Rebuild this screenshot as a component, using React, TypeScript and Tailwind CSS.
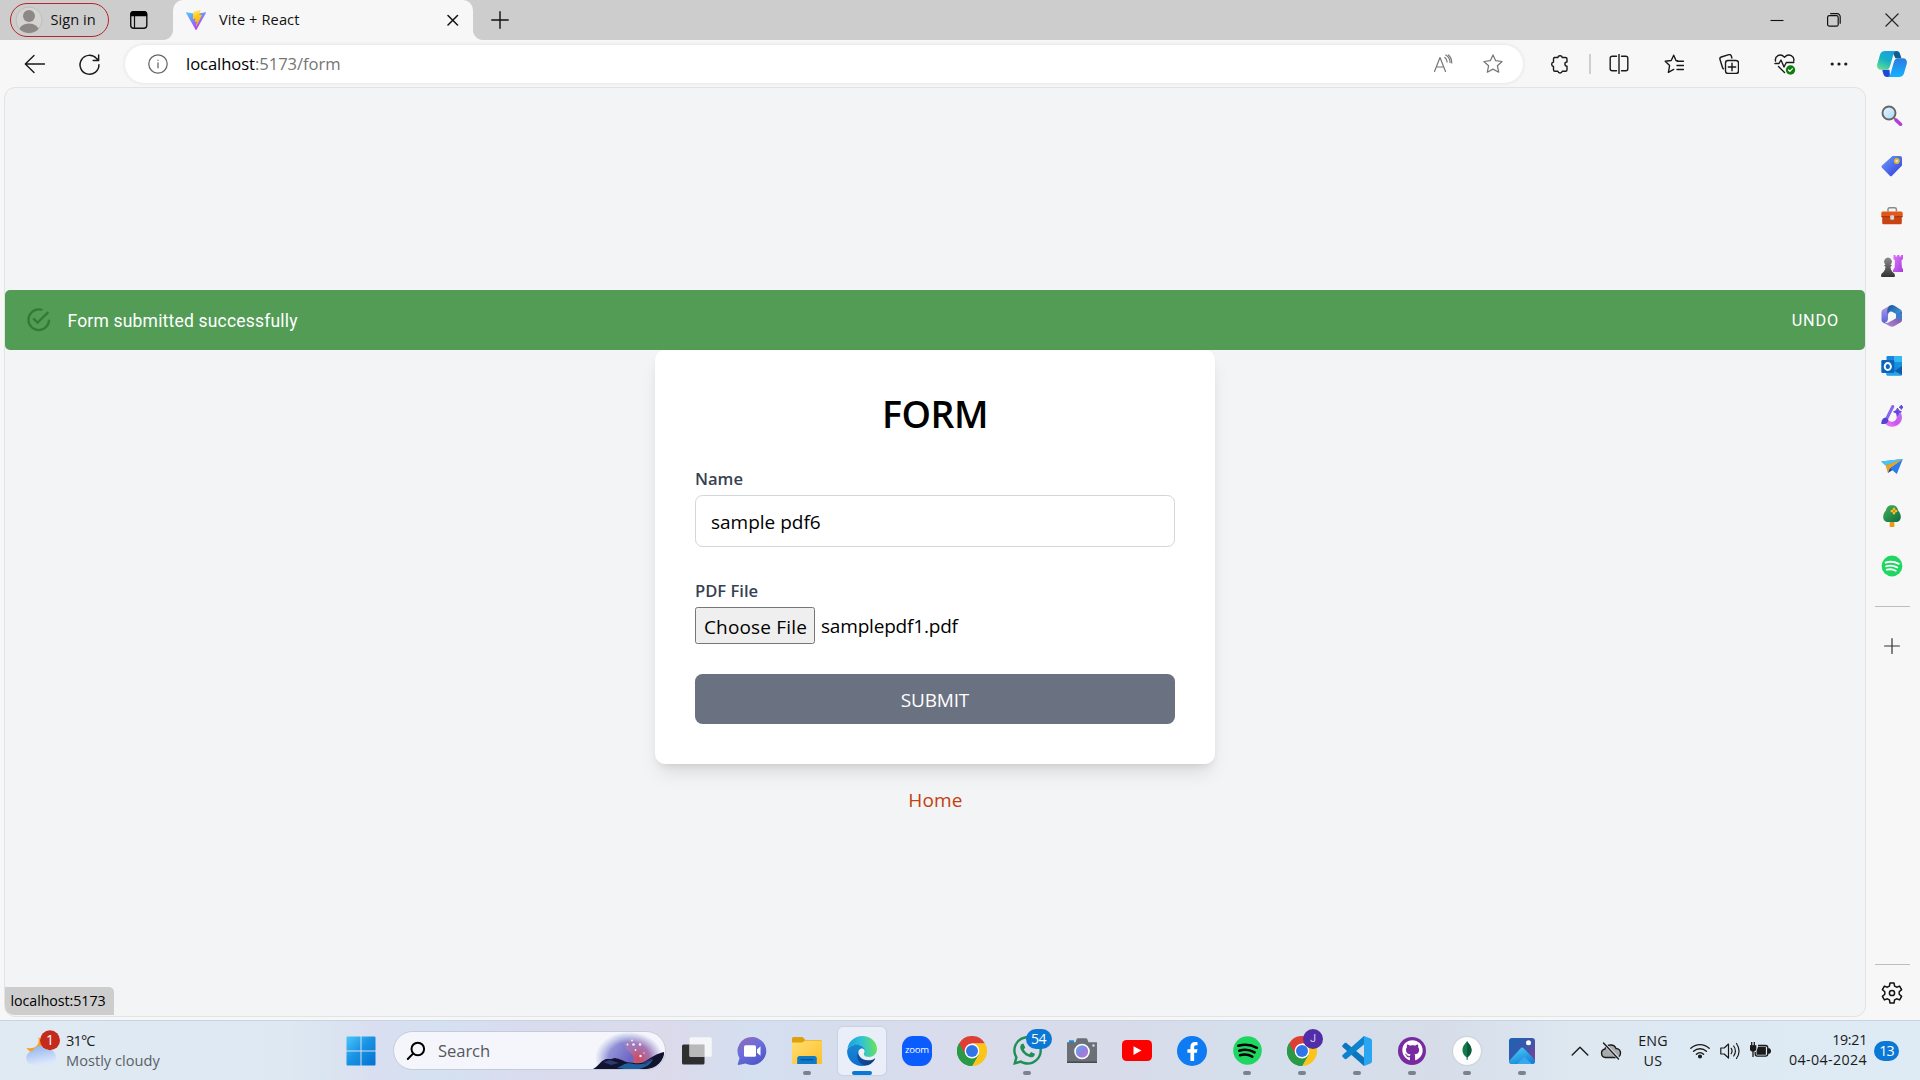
import type { ReactNode, SVGProps } from "react";
import { FaFacebookF, FaGithub, FaSpotify, FaWhatsapp } from "react-icons/fa";

function Line(props: SVGProps<SVGSVGElement>) {
  return (
    <svg
      viewBox="0 0 20 20"
      width="20"
      height="20"
      fill="none"
      stroke="currentColor"
      strokeWidth="1.25"
      strokeLinecap="round"
      strokeLinejoin="round"
      {...props}
      className={"block shrink-0 " + (props.className ?? "")}
    />
  );
}

const STAR = "M10 .9l2.7 5.8 6.4.8-4.7 4.3 1.3 6.4L10 15.1l-5.7 3.1 1.3-6.4L.9 7.5l6.4-.8z";

/* ---------- Browser chrome ---------- */

function ViteLogo() {
  return (
    <svg viewBox="0 0 20 20" width="20" height="20" className="block shrink-0">
      <defs>
        <linearGradient id="viteA" x1="0" y1="0" x2="0.6" y2="1">
          <stop offset="0" stopColor="#41d1ff" />
          <stop offset="1" stopColor="#bd34fe" />
        </linearGradient>
        <linearGradient id="viteB" x1="0.4" y1="0" x2="0.6" y2="1">
          <stop offset="0" stopColor="#ffea83" />
          <stop offset="0.3" stopColor="#ffcf20" />
          <stop offset="1" stopColor="#ffa800" />
        </linearGradient>
      </defs>
      <path d="M19.9 3.1L10.5 19.7a.5.5 0 0 1-.9 0L.1 3.1a.5.5 0 0 1 .5-.8L10 4l9.4-1.7a.5.5 0 0 1 .5.8z" fill="url(#viteA)" />
      <path d="M14.4.1L7.600 1.400a.3.3 0 0 0-.3.3l-.5 6.900c0 .2.200.4.400.3l1.900-.400c.2 0 .400.2.300.4l-.6 2.700c0 .2.200.4.400.3l1.200-.3c.2-.1.400.1.300.3l-.9 4.300c0 .300.300.4.500.200l5.700-11.300c.1-.2-.1-.4-.3-.4l-2 .4c-.2 0-.300-.2-.300-.3l1.300-4.500c.1-.1-.1-.3-.3-.2z" fill="url(#viteB)" />
    </svg>
  );
}

function TabStrip() {
  return (
    <header className="flex h-10 items-start bg-[#cdcdcd] text-[#111]">
      <div className="mt-[3px] ml-[10px] flex h-[34px] w-[98.5px] shrink-0 items-center rounded-full border-[1.5px] border-[#b3262b] pl-[3.5px]">
        <svg viewBox="0 0 28 28" width="28" height="28" className="block shrink-0">
          <defs>
            <clipPath id="avatar">
              <circle cx="14" cy="14" r="13" />
            </clipPath>
          </defs>
          <circle cx="14" cy="14" r="13" fill="#d5d3d0" stroke="#c0bebb" />
          <g clipPath="url(#avatar)" fill="#8b8885">
            <circle cx="14" cy="10" r="6" />
            <ellipse cx="14" cy="24.500" rx="9.800" ry="7" />
          </g>
        </svg>
        <span className="ml-[8px] pb-px text-[14.6px] tracking-[0.05px] whitespace-nowrap">Sign in</span>
      </div>
      <svg viewBox="0 0 20 20" width="20" height="20" className="mt-[10px] ml-[20.5px] block shrink-0">
        <rect x="1.700" y="1.700" width="16.100" height="16.600" rx="3" fill="none" stroke="#111" strokeWidth="1.400" />
        <path d="M1.500 6.200V4A3 3 0 0 1 4.500 1.100h10.600A3 3 0 0 1 18.100 4v2.200z" fill="#000" />
        <path d="M5.500 6v12" stroke="#111" strokeWidth="1.200" />
      </svg>
      <div className="ml-[14px] flex h-10 shrink-0 items-end">
        <div className="h-[10px] w-[10px] bg-[radial-gradient(circle_at_0_0,#cdcdcd_9.500px,#f7f7f7_10.500px)]" />
        <div className="flex h-10 w-[300px] items-center rounded-t-[10px] bg-[#f7f7f7] pl-[13px]">
          <ViteLogo />
          <span className="ml-[13px] w-[230px] text-[14.6px] tracking-[0.11px] whitespace-nowrap">Vite + React</span>
          <Line viewBox="0 0 12 12" width="12" height="12" strokeWidth="1.500" className="ml-[-2px]">
            <path d="M1 1.500l9.500 9.500M10.500 1.500L1 11" />
          </Line>
        </div>
        <div className="h-[10px] w-[10px] bg-[radial-gradient(circle_at_100%_0,#cdcdcd_9.500px,#f7f7f7_10.500px)]" />
      </div>
      <Line viewBox="0 0 18 18" width="18" height="18" strokeWidth="1.400" className="mt-[10.5px] ml-[8px]">
        <path d="M9 .8v16.400M.8 9h16.400" />
      </Line>
      <div className="mt-[12px] mr-[21.5px] ml-auto flex h-[15px] items-center">
        <svg viewBox="0 0 14 14" width="14" height="14" className="block">
          <path d="M.5 7.500h13" stroke="#111" strokeWidth="1.100" />
        </svg>
        <svg viewBox="0 0 14 14" width="14" height="14" className="ml-[43px] block" fill="none" stroke="#111" strokeWidth="1.200">
          <rect x=".6" y="2.600" width="10.600" height="10.600" rx="1.800" />
          <path d="M3.200.7h7a3 3 0 0 1 3 3v7" />
        </svg>
        <svg viewBox="0 0 14 14" width="14" height="14" className="ml-[44px] block" fill="none" stroke="#222" strokeWidth="1.100">
          <path d="M.5.5l13 13M13.500.5l-13 13" />
        </svg>
      </div>
    </header>
  );
}

function CopilotIcon() {
  return (
    <svg viewBox="0 0 30 26" width="30" height="26" className="block shrink-0">
      <defs>
        <linearGradient id="cpA" x1="0.700" y1="0" x2="0.2" y2="1">
          <stop offset="0" stopColor="#1b9de2" />
          <stop offset="0.500" stopColor="#16b3c3" />
          <stop offset="1" stopColor="#63dc90" />
        </linearGradient>
        <linearGradient id="cpB" x1="0.500" y1="0" x2="0.500" y2="1">
          <stop offset="0" stopColor="#2c7be0" />
          <stop offset="1" stopColor="#14b3ff" />
        </linearGradient>
      </defs>
      <path d="M15 0h4.500c2 0 3 1 3.600 3l1.300 4.300h-6z" fill="#0c5f8c" />
      <path d="M13 26h-3c-2 0-3-1-3.600-3L5.200 18.700h7.300z" fill="#1a4ad8" />
      <path d="M8 0h12c-2 0-3 1.600-3.600 3.600l-3.300 11.300c-.7 2.400-2 3.800-4.300 3.800H4.200C.6 18.700-.4 16 .3 13L3 3.800C3.800 1.200 5.500 0 8 0z" fill="url(#cpA)" />
      <path d="M22 26H10c2 0 3-1.600 3.600-3.600l3.300-11.300c.7-2.400 2-3.800 4.300-3.800h4.600c3.600 0 4.600 2.700 3.900 5.700L27 22.200c-.8 2.600-2.500 3.800-5 3.800z" fill="url(#cpB)" />
    </svg>
  );
}

function Toolbar() {
  return (
    <div className="flex h-[47px] items-center bg-[#f7f7f7] pt-px text-[#1a1a1a]">
      <Line viewBox="0 0 22 20" width="22" height="20" className="ml-[24px]" strokeWidth="1.400">
        <path d="M20.500 10H1.500M10 1.500L1.300 10l8.700 8.500" />
      </Line>
      <Line className="ml-[33px] overflow-visible" width="21" height="21" strokeWidth="1.400">
        <path d="M19 10.200A9 9 0 1 1 16.800 4.400L18.500 6M18.700 1v5.200h-5.200" />
      </Line>
      <div className="ml-[25px] flex h-[38px] w-[1398px] shrink-0 items-center rounded-full bg-white shadow-[0_0_4px_rgba(0,0,0,0.1)]">
        <Line className="ml-[22.5px] text-[#666]">
          <circle cx="10" cy="10" r="9.200" />
          <path d="M10 8.800v5M10 6v.3" />
        </Line>
        <span className="ml-[18.5px] text-[16.6px] tracking-[-0.06px] whitespace-nowrap text-[#757575]">
          <span className="text-black">localhost</span>:5173/form
        </span>
        <Line className="ml-auto text-[#777]" strokeWidth="1.200">
          <path d="M1.500 17.500L7 3.500l5.500 14M3.500 13h7M11.800 3.500c1.600 1.200 2.300 2.700 2.300 4.500M12.800 1c2.700 1.700 4.200 4 4.300 7.500M15.500 1c2 1.800 3.200 4.500 3.300 8" />
        </Line>
        <Line className="mr-[20px] ml-[30px] text-[#777]">
          <path d={STAR} />
        </Line>
      </div>
      <Line className="ml-[27px]" strokeWidth="1.400">
        <path d="M4.500 3.500h3.300a2.300 2.300 0 0 1 4.500 0h3.200a1.500 1.500 0 0 1 1.500 1.500v3a2.100 2.100 0 0 0 0 4.200v3.500a1.500 1.500 0 0 1-1.500 1.500h-3.200a2.300 2.300 0 0 1-4.500 0H5a1.500 1.500 0 0 1-1.500-1.500v-3.200a2.300 2.300 0 0 1 0-4.500V5A1.500 1.500 0 0 1 4.500 3.500z" />
      </Line>
      <div className="ml-[19px] h-5 w-[1.500px] shrink-0 bg-[#cfcfcf]" />
      <Line className="ml-[18.500px]" strokeWidth="1.400">
        <path d="M7.500 2.200H3.200a2 2 0 0 0-2 2v10.600a2 2 0 0 0 2 2h4.300M12.500 2.200h4.300a2 2 0 0 1 2 2v10.600a2 2 0 0 1-2 2h-4.300M10 .2v19.300" />
      </Line>
      <Line className="ml-[35px]" strokeWidth="1.400">
        <path d="M13.500 6.800L12 6.500 9.700 1.200 7.200 6.500l-6 .7 4.400 4.300-1.200 6.900 5.300-3M13 7.300h6.500M13 11.500h6.500M13 15.500h6.500" />
      </Line>
      <Line className="ml-[35px]" strokeWidth="1.400">
        <path d="M4.500 14.800a2 2 0 0 1-1-1.300L1 5.500a2 2 0 0 1 1.300-2.500l7.500-2.300A2 2 0 0 1 12.300 2l.6 2" />
        <rect x="6.500" y="6.500" width="13" height="13" rx="2.500" />
        <path d="M13 9.300v7.400M9.300 13h7.400" />
      </Line>
      <svg viewBox="0 0 22 22" width="22" height="22" className="ml-[34.5px] block shrink-0" fill="none" stroke="#1a1a1a" strokeWidth="1.400" strokeLinecap="round" strokeLinejoin="round">
        <path d="M1.500 8C.5 3.500 6-.5 10.500 4.200 15-.5 21 3.500 19.700 8M1 10.500h4l2-3.500 3 7 2.300-4.500h7.500M4.500 13.500l6 6" />
        <circle cx="16.500" cy="17" r="4.700" fill="#107c10" stroke="none" />
        <path d="M14.500 17l1.400 1.400 2.500-2.700" stroke="#fff" strokeWidth="1.200" />
      </svg>
      <svg viewBox="0 0 18 4" width="18" height="4" className="ml-[34.5px] block shrink-0" fill="#1a1a1a">
        <circle cx="2.200" cy="2" r="1.600" />
        <circle cx="9" cy="2" r="1.600" />
        <circle cx="15.800" cy="2" r="1.600" />
      </svg>
      <div className="ml-[29px] shrink-0">
        <CopilotIcon />
      </div>
    </div>
  );
}

/* ---------- Edge sidebar ---------- */

function SideSvg({ children }: { children: ReactNode }) {
  return (
    <svg viewBox="0 0 22 22" width="22" height="22" className="block">
      {children}
    </svg>
  );
}

const sideIcons: ReactNode[] = [
  <SideSvg key="search">
    <defs>
      <linearGradient id="lens" x1="0" y1="0" x2="1" y2="1">
        <stop offset="0" stopColor="#e8f6ff" />
        <stop offset="1" stopColor="#a9d8f7" />
      </linearGradient>
    </defs>
    <path d="M13 13l2 2" stroke="#777" strokeWidth="2" />
    <path d="M15.200 15.200l4.300 4" stroke="#b43ddb" strokeWidth="3.600" strokeLinecap="round" />
    <circle cx="8" cy="8" r="6.500" fill="url(#lens)" stroke="#666" strokeWidth="1.900" />
  </SideSvg>,
  <SideSvg key="tag">
    <defs>
      <linearGradient id="tag" x1="0" y1="0" x2="1" y2="1">
        <stop offset="0" stopColor="#6aa2f8" />
        <stop offset="1" stopColor="#3338dd" />
      </linearGradient>
    </defs>
    <path d="M11.500 1h7.500a2 2 0 0 1 2 2v7.500L11 20.700a1.600 1.600 0 0 1-2.200 0L1 12.800a1.600 1.600 0 0 1 0-2.200z" fill="url(#tag)" />
    <circle cx="15.800" cy="6" r="2.100" fill="#ded8ff" stroke="#e2bd20" strokeWidth="1.600" />
  </SideSvg>,
  <SideSvg key="toolbox">
    <path d="M7 6.500V4.300A1.700 1.700 0 0 1 8.700 2.700h5A1.700 1.700 0 0 1 15.400 4.300v2.200" fill="none" stroke="#858b90" strokeWidth="1.500" />
    <path d="M1.200 11h19.600v6.800a1.500 1.500 0 0 1-1.500 1.500H2.700a1.500 1.500 0 0 1-1.500-1.500z" fill="#c94413" />
    <path d="M1.800 6.500h18.400a1.500 1.500 0 0 1 1.500 1.500v4H.3V8a1.500 1.500 0 0 1 1.500-1.500z" fill="#e25819" />
    <path d="M.5 11.700h21" stroke="#9c3210" strokeWidth="1" />
    <rect x="9.200" y="10.300" width="3.900" height="4.500" rx="1" fill="#d3d6d8" />
  </SideSvg>,
  <SideSvg key="chess">
    <defs>
      <linearGradient id="rook" x1="0" y1="0" x2="1" y2="1">
        <stop offset="0" stopColor="#d97bf5" />
        <stop offset="1" stopColor="#a83ae0" />
      </linearGradient>
      <linearGradient id="pawn" x1="0" y1="0" x2="0" y2="1">
        <stop offset="0" stopColor="#8c8c8c" />
        <stop offset="1" stopColor="#333" />
      </linearGradient>
    </defs>
    <path d="M12.500 0h2v1.600h1.700V0h2.200v1.600h1.700V0h2v4l-1.600 1.500.4 7 1.600 2.500v2H12v-2l1.600-2.500.4-7L12.500 4z" fill="url(#rook)" />
    <path d="M7 2.500a4 4 0 0 1 2.500 7l1.500 1-1.500 1.200c.2 2.800 1 4.500 3.700 6.800.8.700 1 3.500 0 3.500H.8c-1 0-.8-2.800 0-3.500C3.500 16.200 4.300 14.500 4.500 11.700L3 10.500l1.500-1a4 4 0 0 1 2.500-7z" fill="url(#pawn)" />
  </SideSvg>,
  <SideSvg key="m365">
    <defs>
      <linearGradient id="mA" x1="0" y1="0" x2="0" y2="1">
        <stop offset="0" stopColor="#b49be6" />
        <stop offset="1" stopColor="#5a63d8" />
      </linearGradient>
      <linearGradient id="mB" x1="0" y1="0" x2="1" y2="1">
        <stop offset="0" stopColor="#1d4d9c" />
        <stop offset="1" stopColor="#45b4ee" />
      </linearGradient>
      <linearGradient id="mC" x1="1" y1="0" x2="0" y2="1">
        <stop offset="0" stopColor="#6a4a94" />
        <stop offset="1" stopColor="#b98be0" />
      </linearGradient>
    </defs>
    <path d="M8.500.8L2 4.500A3 3 0 0 0 .5 7v8A3 3 0 0 0 2 17.500l1.500.8C6 17 7 16 7 13V8z" fill="url(#mA)" />
    <path d="M8.500.8a5 5 0 0 1 5 0l6 3.700A3 3 0 0 1 21 7v7c-1-2-3.500-3.500-6.500-5.200L11 6.700C8.500 6 7 8 7 11 5.500 7 6 3 8.500.8z" fill="url(#mB)" />
    <path d="M21 7v8a3 3 0 0 1-1.500 2.500l-6 3.600a5 5 0 0 1-5 0L3 18c3 .3 5-.8 8-2.600 4-2.300 4-3.400 4-6.600z" fill="url(#mC)" />
    <path d="M15 9l6-1v5.500c-1 1.500-3 1.500-6-.5z" fill="#3c7fd2" />
    <path d="M11 6.900l4 2.300v4L11 15.500l-4-2.300v-4z" fill="#f7f7f7" />
  </SideSvg>,
  <SideSvg key="outlook">
    <rect x="5.500" y="1" width="15.500" height="19.500" rx="1.200" fill="#1a86dc" />
    <path d="M13 1h7a1 1 0 0 1 1 1v5h-8z" fill="#35b8f1" />
    <path d="M13 7h8v5h-8z" fill="#1490df" />
    <path d="M5.500 12l8 4.500L21 11v8.500a1 1 0 0 1-1 1H6.500a1 1 0 0 1-1-1z" fill="#25a5ea" />
    <path d="M13.500 16l7.500-5v9z" fill="#0f5da9" />
    <rect x=".3" y="5" width="13" height="13" rx="1.300" fill="#0b64bd" />
    <ellipse cx="6.800" cy="11.500" rx="3.100" ry="3.500" fill="none" stroke="#fff" strokeWidth="1.900" />
  </SideSvg>,
  <SideSvg key="designer">
    <defs>
      <linearGradient id="dsg" x1="0" y1="1" x2="1" y2="0">
        <stop offset="0" stopColor="#f08cf6" />
        <stop offset="0.500" stopColor="#cf52ee" />
        <stop offset="1" stopColor="#b57bf2" />
      </linearGradient>
    </defs>
    <path d="M2.500 16.500c2 .5 3.500-.2 4.500-2 1.500 2.600 5 3.200 7.200 1 1.600-1.600 1.800-3.500 1-5.500l4.600-2.500c2 4 1.500 8.500-1.800 11.600-4.500 4.200-12 3.700-15.500-2.600z" fill="url(#dsg)" />
    <path d="M11.800 1.500L5.800 13.500" stroke="#8a63ee" strokeWidth="3" strokeLinecap="round" />
    <path d="M.3 19C.3 15 2 12.500 4.700 12.700c2.600.3 3.300 3 1.700 4.700C5 19 2.700 19.300.3 19z" fill="#5145d5" />
    <path d="M16.500 3l1.200 2.600 2.700 1.200-2.700 1.200-1.200 2.700-1.200-2.700-2.700-1.200 2.700-1.200zM20.300 0l.7 1.600 1.500.6-1.500.7-.7 1.500-.7-1.500-1.500-.7 1.500-.6z" fill="#6347dd" stroke="#6347dd" />
  </SideSvg>,
  <SideSvg key="drop">
    <path d="M.3 6.500L21.800 4l-15 8z" fill="#46bdf2" />
    <path d="M21.800 4l-6 15-7-6z" fill="#2b7be8" />
    <path d="M21.800 4L9 12.500 7 18l-1.200-6.500L.3 6.500z" fill="#3aaef0" />
    <path d="M21.800 4L4.500 10.500 7 18l2-5z" fill="#f0a01c" />
    <path d="M7 18l2-5 2.500 2z" fill="#17439b" />
    <path d="M.3 6.500L21.800 4 4.500 10.300z" fill="#4cc3f5" />
  </SideSvg>,
  <SideSvg key="tree">
    <defs>
      <linearGradient id="tree" x1="0" y1="0" x2="1" y2="1">
        <stop offset="0" stopColor="#44b35a" />
        <stop offset="1" stopColor="#0e6a3c" />
      </linearGradient>
    </defs>
    <rect x="8.700" y="15" width="4.700" height="7" rx=".6" fill="#eb9b17" />
    <path d="M11 .3c4 0 5.500 2.500 6.300 5.500 1.500 1.500 2.500 4 2.500 6.200 0 3-2 5-5 5H7.200c-3 0-5-2-5-5 0-2.200 1-4.700 2.500-6.200C5.500 2.800 7 .3 11 .3z" fill="url(#tree)" />
    <path d="M13 3.800v4.400M10.800 6h4.400" stroke="#f5c02c" strokeWidth="2.500" strokeLinecap="round" />
    <circle cx="13" cy="6" r="1.100" fill="#d97812" />
  </SideSvg>,
  <SideSvg key="spotify">
    <circle cx="11" cy="11" r="10.400" fill="#1ed760" />
    <path d="M4.500 7.600c4.500-1.400 9.500-.8 13.300 1.300M5 11.300c4-1.100 8-.7 11.300 1.200M5.700 14.700c3.200-.8 6.300-.5 9 1" fill="none" stroke="#fff" strokeWidth="1.800" strokeLinecap="round" />
  </SideSvg>,
];

function Sidebar() {
  return (
    <aside className="flex w-[54px] shrink-0 flex-col items-center bg-[#f7f7f7] pt-[17.500px] pr-[2px]">
      <div className="flex flex-col gap-[28px]">
        {sideIcons}
      </div>
      <div className="mt-[29.500px] h-px w-[35px] bg-[#bdbdbd]" />
      <Line viewBox="0 0 16 16" width="16" height="16" strokeWidth="1.200" className="mt-[31px] text-[#333]">
        <path d="M8 .6v14.800M.6 8h14.800" />
      </Line>
      <div className="mt-auto h-px w-[35px] bg-[#bdbdbd]" />
      <Line viewBox="0 0 22 22" width="22" height="22" strokeWidth="1.500" className="mt-[17px] mb-[16px] text-[#111]">
        <path d="M9 1h4l.6 3.100 2 1.100 3-1.100 2 3.500-2.400 2.100v2.600l2.400 2.100-2 3.500-3-1.100-2 1.100L13 21H9l-.6-3.100-2-1.100-3 1.100-2-3.500 2.400-2.100V9.700L1.400 7.600l2-3.500 3 1.100 2-1.100z" />
        <circle cx="11" cy="11" r="2.600" />
      </Line>
    </aside>
  );
}

/* ---------- Web page ---------- */

function Snackbar() {
  return (
    <div className="mt-[202px] flex h-[60px] w-full items-center rounded-[5px] bg-[#529c56] text-white">
      <svg viewBox="0 0 24 24" width="27.500" height="27.500" className="ml-[20px] block" fill="#2e7d32">
        <path d="M20,12A8,8 0 0,1 12,20A8,8 0 0,1 4,12A8,8 0 0,1 12,4C12.76,4 13.5,4.11 14.2, 4.31L15.77,2.74C14.61,2.26 13.34,2 12,2A10,10 0 0,0 2,12A10,10 0 0,0 12,22A10,10 0 0,0 22,12M7.91,10.08L6.5,11.5L11,16L21,6L19.59,4.58L11,13.17L7.91,10.08Z" />
      </svg>
      <span className="ml-[15px] pt-[2px] font-[Roboto,sans-serif] text-[17.5px] tracking-[0.19px] whitespace-nowrap">
        Form submitted successfully
      </span>
      <span className="mr-[26px] ml-auto pt-[3px] font-[Roboto,sans-serif] text-[16.250px] tracking-[0.85px]">UNDO</span>
    </div>
  );
}

function FormCard() {
  return (
    <div className="w-[560px] rounded-[10px] bg-white p-10 shadow-[0_12px_19px_-4px_rgba(0,0,0,0.1),0_5px_8px_-4px_rgba(0,0,0,0.1)]">
      <h1 className="h-[45px] pt-[2px] text-center text-[37.5px] leading-[44px] font-semibold tracking-[-0.5px] text-black">FORM</h1>
      <div className="mt-[31px] h-[25px] text-[16.6px] leading-[25px] font-[550] text-gray-700">Name</div>
      <div className="mt-1 flex h-[52px] items-center rounded-[7.5px] border border-gray-300 px-[15px] pt-[2px] text-[19px] text-black">
        sample pdf6
      </div>
      <div className="mt-[31px] h-[25px] text-[16.600px] leading-[25px] font-[550] text-gray-700">PDF File</div>
      <div className="mt-1 flex h-[37px] items-center text-[19px] text-black">
        <div className="flex h-[37px] w-[120px] items-center justify-center rounded-[2.5px] border border-[#767676] bg-[#efefef] pt-[3px] pl-px tracking-[0.18px] whitespace-nowrap">
          Choose File
        </div>
        <span className="ml-[6px] pt-[2px] tracking-[-0.19px]">samplepdf1.pdf</span>
      </div>
      <div className="mt-[30px] flex h-[50px] items-center justify-center rounded-[7.5px] bg-gray-500 pt-[2px] text-[19px] tracking-[-0.19px] text-white">
        SUBMIT
      </div>
    </div>
  );
}

function Page() {
  return (
    <main className="relative ml-1 flex h-[930px] w-[1862px] shrink-0 flex-col items-center overflow-hidden rounded-[11px] border border-[#e2e3e5] bg-gray-100">
      <Snackbar />
      <FormCard />
      <div className="mt-[21px] pl-px text-[19px] leading-[30px] tracking-[0.150px] text-[#c2410c]">Home</div>
      <div className="absolute bottom-px -left-px flex h-[28px] w-[110px] items-center rounded-tr-[5px] rounded-bl-[10px] bg-[#cdcdcd] pl-[6.500px] text-[14.250px] tracking-[-0.07px] text-black">
        localhost:5173
      </div>
    </main>
  );
}

/* ---------- Taskbar ---------- */

function WeatherIcon() {
  return (
    <svg viewBox="0 0 34 36" width="34" height="36" className="block shrink-0">
      <defs>
        <linearGradient id="cloud" x1="0" y1="0" x2="0.300" y2="1">
          <stop offset="0" stopColor="#8db0ec" />
          <stop offset="1" stopColor="#dbe8fb" />
        </linearGradient>
      </defs>
      <path d="M12.500 7c1 8-2 12-12 11 4 6 11 6.500 15 2l3-8z" fill="#f7a32b" />
      <path d="M7.500 35a7 7 0 0 1-.5-14c1.500-6 11-7 14-1 5-1.500 9 2.500 9 7.500 0 4-3 7.500-7 7.500z" fill="url(#cloud)" />
      <circle cx="24" cy="10.200" r="10" fill="#c42b1c" />
    </svg>
  );
}

function SearchScene() {
  return (
    <svg viewBox="0 0 72 37" width="72" height="37" className="block shrink-0">
      <defs>
        <radialGradient id="fade" gradientUnits="userSpaceOnUse" cx="36" cy="26" r="34" gradientTransform="matrix(1 0 0 0.760 0 6)">
          <stop offset="0.600" stopColor="#fff" />
          <stop offset="1" stopColor="#fff" stopOpacity="0" />
        </radialGradient>
        <mask id="skyMask">
          <rect width="72" height="37" fill="url(#fade)" />
        </mask>
        <radialGradient id="glow" gradientUnits="userSpaceOnUse" cx="45" cy="27" r="26">
          <stop offset="0" stopColor="#d2485a" />
          <stop offset="0.450" stopColor="#a673b0" />
          <stop offset="1" stopColor="#8790d8" />
        </radialGradient>
        <linearGradient id="planet" x1="0" y1="0" x2="1" y2="0.500">
          <stop offset="0" stopColor="#b9c0ea" />
          <stop offset="1" stopColor="#6c66c4" />
        </linearGradient>
        <clipPath id="pill">
          <path d="M0 0h53a18.500 18.500 0 0 1 0 37H0z" />
        </clipPath>
      </defs>
      <g clipPath="url(#pill)">
        <g mask="url(#skyMask)">
          <rect width="72" height="37" fill="url(#glow)" />
          <path d="M0 37V6h22c8 1 9 7 12 12 4 4 7 5 7 10l-4 9z" fill="url(#planet)" />
        </g>
        <path d="M0 37c6-3 7-8 13-10 5 0 6 0 9-1 5 1 7 2 11 4 10 1 16 3 21-2 5-3 9-6 17-8v20z" fill="#12142f" />
        <path d="M24 36c7-3 8-6 17-4 6 1 12 0 19-5-3 7-10 10-20 11z" fill="#1f5f9e" />
        <path d="M10 30l7-2 9 3-8 2zM50 30l10-4-8 7z" fill="#2b3a74" />
        <g fill="#fff1e8">
          <circle cx="39" cy="8.500" r=".9" />
          <circle cx="34.500" cy="12.500" r="1" />
          <circle cx="40.500" cy="12.500" r="1.300" />
          <circle cx="47" cy="12.500" r="1.300" />
          <circle cx="42.500" cy="18" r=".9" />
          <circle cx="47.500" cy="24" r="1.200" />
          <circle cx="51" cy="21" r=".7" />
        </g>
      </g>
    </svg>
  );
}

function ChromeIcon() {
  return (
    <svg viewBox="0 0 30 30" width="30" height="30" className="block">
      <path d="M15 15L2 7.500A15 15 0 0 1 28 7.500H15z" fill="#dd3f34" />
      <path d="M15 7.500h13A15 15 0 0 1 15 30l6.500-11.200z" fill="#fcc419" />
      <path d="M2 7.500A15 15 0 0 0 15 30l6.500-11.200L15 15z" fill="#2a9a47" />
      <path d="M2 7.500l6.500 11.300L15 12V7.500z" fill="#dd3f34" />
      <path d="M2 7.500A15 15 0 0 0 0 15c0 8.300 6.700 15 15 15l6.500-11.200-6.500 1-6.500-1z" fill="#2a9a47" />
      <circle cx="15" cy="15" r="7.400" fill="#fff" />
      <circle cx="15" cy="15" r="6" fill="#2f75e8" />
    </svg>
  );
}

function EdgeIcon() {
  return (
    <svg viewBox="0 0 30 30" width="30" height="30" className="block">
      <defs>
        <linearGradient id="edA" x1="0" y1="0.500" x2="1" y2="0.400">
          <stop offset="0" stopColor="#1b9bde" />
          <stop offset="0.500" stopColor="#2fc3d3" />
          <stop offset="1" stopColor="#6be556" />
        </linearGradient>
        <linearGradient id="edB" x1="0.500" y1="0" x2="0.500" y2="1">
          <stop offset="0" stopColor="#1689d2" />
          <stop offset="1" stopColor="#0d6fd0" />
        </linearGradient>
        <linearGradient id="edC" x1="0" y1="0" x2="1" y2="0.500">
          <stop offset="0" stopColor="#0e56a8" />
          <stop offset="1" stopColor="#123f80" />
        </linearGradient>
      </defs>
      <path d="M.4 13C1.500 5.500 7.500 0 15.200 0 24 0 30 6.200 30 13c0 5.200-4 8-8 8-4.500 0-6-2-5.300-3.200C18 15.500 18.300 9 10.500 9 5 9 1.300 11 .4 13z" fill="url(#edA)" />
      <path d="M.1 15C.3 11 5.500 8.500 10.500 8.700c5 .3 7.300 3.300 7.200 6-1.200-2.500-5-3-6.500.8C9.500 20.500 13 27.500 20 28.800c-1.500.8-3.300 1.200-5 1.200C6.500 30-.2 23 .1 15z" fill="url(#edB)" />
      <path d="M11.500 14.500c-1.200 3.800 2 9.800 9.500 9.800 3 0 4.800-.6 6.300-1.600.6-.3 1 .2.600.7C25.500 27.300 22 29.500 18 29.500 11.500 28.500 8 20 11.500 14.500z" fill="url(#edC)" />
      <path d="M14.500 12.500c2.400 0 3.500 2 2.500 4.300-.6 1.200-.5 2.300 1 3.300-4.500-.5-6-4-5-6.500.3-.7.800-1 1.500-1.100z" fill="#eef2fa" />
    </svg>
  );
}

function TaskButton({ children, running = false, active = false }: { children: ReactNode; running?: boolean; active?: boolean }) {
  return (
    <div className="flex w-[55px] shrink-0 justify-center">
      <div
        className={
          active
            ? "relative flex h-[48px] w-[48px] items-center justify-center rounded-[5px] bg-[#e9eef8] shadow-[0_0_1px_1px_rgba(180,190,210,0.35)]"
            : "relative flex h-[48px] w-[48px] items-center justify-center"
        }
      >
        {children}
        {running && (
          <div className="absolute inset-x-0 bottom-0 flex justify-center">
            <div className="h-[4px] w-[8px] rounded-full bg-[#7c828c]" />
          </div>
        )}
        {active && (
          <div className="absolute inset-x-0 bottom-0 flex justify-center">
            <div className="h-[4px] w-[20px] rounded-full bg-[#0a78d4]" />
          </div>
        )}
      </div>
    </div>
  );
}

function Apps() {
  return (
    <div className="flex items-center">
      <TaskButton>
        <svg viewBox="0 0 30 28" width="30" height="28" className="block">
          <rect x="0" y="7.500" width="22.500" height="20" rx="1.500" fill="#2f2f2f" />
          <rect x="7.500" y=".2" width="22.300" height="19.500" rx="1.500" fill="#f8f8f8" fillOpacity=".9" />
          <path d="M7.500 7.500h15v12.200h-15z" fill="#b9b9b9" />
        </svg>
      </TaskButton>
      <TaskButton>
        <svg viewBox="0 0 30 30" width="30" height="30" className="block">
          <defs>
            <linearGradient id="chat" x1="0" y1="0" x2="0.600" y2="1">
              <stop offset="0" stopColor="#9a68b0" />
              <stop offset="0.500" stopColor="#6a6fdc" />
              <stop offset="1" stopColor="#5157c8" />
            </linearGradient>
          </defs>
          <path d="M15 1a14.300 14 0 1 1-6.500 26.500L1.500 29c-.6 0-.8-.3-.7-.9L2.500 22A14.300 14 0 0 1 15 1z" fill="url(#chat)" />
          <rect x="7" y="9.300" width="12" height="11.500" rx="1.500" fill="#fff" />
          <path d="M20 13.500l3.500-3.200v9.500L20 16.700z" fill="#fff" />
        </svg>
      </TaskButton>
      <TaskButton running>
        <svg viewBox="0 0 30 27" width="30" height="27" className="block">
          <defs>
            <linearGradient id="folder" x1="0" y1="0" x2="1" y2="1">
              <stop offset="0" stopColor="#ffdf73" />
              <stop offset="1" stopColor="#fdbf2a" />
            </linearGradient>
          </defs>
          <path d="M0 1.500A1.500 1.500 0 0 1 1.500 0h8.300c1 0 1.500.6 2.300 1.500L13.500 3H28.500A1.500 1.500 0 0 1 30 4.500V9H0z" fill="#e0a00c" />
          <path d="M0 5.500h10.500L13 3.500h17V27H0z" fill="url(#folder)" />
          <path d="M5.200 27v-5.500a2.500 2.500 0 0 1 2.500-2.500h14.600a2.500 2.500 0 0 1 2.500 2.500V27z" fill="#0f7bc8" />
          <path d="M8.500 22.700h13" stroke="#0b4f8e" strokeWidth="1.200" />
        </svg>
      </TaskButton>
      <TaskButton active>
        <EdgeIcon />
      </TaskButton>
      <TaskButton>
        <div className="flex h-[30px] w-[30px] items-center justify-center rounded-[11px] bg-[#0b5cff] pb-[2px] text-[9.500px] leading-none font-medium tracking-[-0.2px] text-white">zoom</div>
      </TaskButton>
      <TaskButton>
        <ChromeIcon />
      </TaskButton>
      <TaskButton running>
        <FaWhatsapp size={33} color="#1f8f55" className="shrink-0" />
        <div className="absolute top-[2px] -right-[0.500px] flex h-[20px] w-[26px] items-center justify-center rounded-full bg-[#0a78d4] text-[14px] leading-none tracking-[-0.600px] text-white">54</div>
      </TaskButton>
      <TaskButton>
        <svg viewBox="0 0 30 25" width="30" height="25" className="block">
          <defs>
            <linearGradient id="glass" x1="0" y1="0" x2="1" y2="1">
              <stop offset="0" stopColor="#54b6f5" />
              <stop offset="0.500" stopColor="#8e83dc" />
              <stop offset="1" stopColor="#c774d8" />
            </linearGradient>
          </defs>
          <path d="M2 2.300h5V6H2z" fill="#178ad8" />
          <path d="M9.500 1.500A1.500 1.500 0 0 1 11 .3h8a1.500 1.500 0 0 1 1.400 1.200L21.500 4.200H30V25H0V4.200h8.500z" fill="#6b7077" />
          <path d="M0 23.500h30V25H0z" fill="#474a4f" />
          <circle cx="15" cy="13.500" r="7" fill="url(#glass)" stroke="#fff" strokeWidth="1.600" />
          <circle cx="26.500" cy="7.500" r="1.200" fill="#ddd" />
        </svg>
      </TaskButton>
      <TaskButton>
        <svg viewBox="0 0 30 21" width="30" height="21" className="block">
          <rect width="30" height="21" rx="4.500" fill="#f00" />
          <path d="M11.500 6.300l8 4.300-8 4.300z" fill="#fff" />
        </svg>
      </TaskButton>
      <TaskButton>
        <div className="flex h-[30px] w-[30px] items-end justify-center overflow-hidden rounded-full bg-[#0f7bf2] pb-[5px]">
          <FaFacebookF size={19} color="#fff" />
        </div>
      </TaskButton>
      <TaskButton running>
        <svg viewBox="0 0 29 29" width="29" height="29" className="block">
          <circle cx="14.500" cy="14.500" r="14.300" fill="#1ed760" />
          <path d="M5.300 9.800c6.200-1.900 13.200-1.100 18.600 2M6.200 14.700c5.400-1.500 11-.8 15.400 1.700M7 19.200c4.400-1.200 8.600-.7 12.300 1.400" fill="none" stroke="#000" strokeWidth="2.500" strokeLinecap="round" />
        </svg>
      </TaskButton>
      <TaskButton running>
        <ChromeIcon />
        <div className="absolute top-[2px] right-[3px] flex h-[20px] w-[20px] items-center justify-center rounded-full bg-[#512da8] font-[Roboto,sans-serif] text-[11px] leading-none text-[#d5c7f0]">J</div>
      </TaskButton>
      <TaskButton running>
        <svg viewBox="0 0 30 30" width="30" height="30" className="block">
          <path d="M22 0v30L.8 11.200c-.8-.8-.8-1.600 0-2.300l1.700-1.600c.7-.6 1.500-.6 2.200 0L22 21.500z" fill="#0b75bd" />
          <path d="M22 0v8.500L4.700 22.700c-.7.600-1.500.6-2.200 0L.8 21.100c-.8-.7-.8-1.500 0-2.300z" fill="#0d83cf" />
          <path d="M22 0l6.500 2.600A2.300 2.300 0 0 1 30 4.800v20.400a2.300 2.300 0 0 1-1.500 2.200L22 30z" fill="#2aa5f2" />
        </svg>
      </TaskButton>
      <TaskButton running>
        <div className="flex h-[28px] w-[28px] items-center justify-center rounded-full bg-[#7a2a9f]">
          <FaGithub size={21} color="#fff" />
        </div>
      </TaskButton>
      <TaskButton running>
        <div className="flex h-[28px] w-[28px] items-center justify-center rounded-full bg-[#fdfdfd] shadow-[0_0_2px_rgba(0,0,0,0.2)]">
          <svg viewBox="0 0 10 19" width="10" height="19" className="block">
            <path d="M5 0c.7 2 4.500 4 4.500 9 0 4-2.500 6-4 7.300L5.300 19h-.6l-.2-2.700C3 15 .5 13 .5 9 .5 4 4.300 2 5 0z" fill="#0f7a4c" />
            <path d="M5 0c.7 2 4.500 4 4.500 9 0 4-2.500 6-4 7.300L5.300 19H5z" fill="#0a5a39" />
          </svg>
        </div>
      </TaskButton>
      <TaskButton running>
        <svg viewBox="0 0 26 26" width="26" height="26" className="block">
          <defs>
            <linearGradient id="ph" x1="0" y1="0" x2="1" y2="0.800">
              <stop offset="0" stopColor="#1a63b4" />
              <stop offset="0.600" stopColor="#3f55a8" />
              <stop offset="1" stopColor="#7a3f98" />
            </linearGradient>
            <linearGradient id="mt" x1="0" y1="0" x2="0.600" y2="1">
              <stop offset="0" stopColor="#4fd3fb" />
              <stop offset="1" stopColor="#1583d8" />
            </linearGradient>
            <clipPath id="phc">
              <rect width="26" height="26" rx="3" />
            </clipPath>
          </defs>
          <g clipPath="url(#phc)">
            <rect width="26" height="26" fill="url(#ph)" />
            <path d="M0 23L11.500 10.500a2.300 2.300 0 0 1 3.400 0L26 22v4H0z" fill="url(#mt)" />
            <path d="M8 26l6-6a2 2 0 0 1 2.800 0l6 6z" fill="#3aa6ee" />
            <circle cx="19.500" cy="4.700" r="2.500" fill="#fff" />
          </g>
        </svg>
      </TaskButton>
    </div>
  );
}

function Tray() {
  return (
    <div className="flex h-full items-center text-[14.250px] leading-[20px] text-[#1b1b1b]">
      <Line viewBox="0 0 18 10" width="18" height="10" strokeWidth="1.400" className="mr-[11px]">
        <path d="M1.200 9L9 1.200 16.800 9" />
      </Line>
      <svg viewBox="0 0 22 18" width="22" height="18" className="block shrink-0" fill="none" stroke="#1b1b1b" strokeWidth="1.400" strokeLinecap="round">
        <path d="M5.500 15.500a4.300 4.300 0 0 1-.5-8.500C6 2.500 14 1 16 6.500c6 0 6 9 0 9z" fill="#a9aaac" />
        <path d="M4 1.500l14.500 15" stroke="#dfe8f2" strokeWidth="3" />
        <path d="M3.500 1L18.500 17" />
      </svg>
      <div className="ml-[13px] flex w-[36px] flex-col items-center">
        <span className="tracking-[0.15px]">ENG</span>
        <span className="tracking-[0.3px]">US</span>
      </div>
      <Line viewBox="0 0 20 16" width="20" height="16" strokeWidth="1.300" className="ml-[19px]">
        <path d="M.8 5.300a13.200 13.200 0 0 1 18.400 0M3.600 8.300a9.300 9.300 0 0 1 12.800 0M6.400 11.200a5.200 5.200 0 0 1 7.200 0" />
        <circle cx="10" cy="13.500" r="1.400" fill="currentColor" />
      </Line>
      <Line viewBox="0 0 20 18" width="20" height="18" strokeWidth="1.200" className="ml-[10px]">
        <path d="M.8 6v6h3.400L8.500 16V2L4.200 6zM11.200 6.300c1.100 1.700 1.100 3.700 0 5.400M13.700 4c2.200 3.200 2.200 6.800 0 10M16.500 1.500c3.200 4.700 3.200 10.300 0 15" />
      </Line>
      <svg viewBox="0 0 21 17" width="21" height="17" className="ml-[10px] block shrink-0" fill="none" stroke="#1b1b1b" strokeWidth="1.300">
        <path d="M8 3.500h7.500A2.300 2.300 0 0 1 17.800 5.800v6a2.300 2.300 0 0 1-2.300 2.300H7.200a2 2 0 0 1-2-2V10" />
        <path d="M8.500 5.500h6.700v6.500H7.200V9zM18 7h1.400c1.300 1 1.300 3 0 4H18z" fill="#1b1b1b" />
        <path d="M.3 3.800h5.400v2.500a2.700 2.700 0 0 1-5.400 0z" fill="#1b1b1b" />
        <path d="M1.700 0v4M4.300 0v4M3 9v6" />
      </svg>
      <div className="ml-[18px] flex w-[78px] flex-col items-end pb-[2px] whitespace-nowrap">
        <span className="tracking-[-0.300px]">19:21</span>
        <span className="tracking-[0.370px]">04-04-2024</span>
      </div>
      <div className="mr-[21px] ml-[7px] flex h-[20px] w-[25px] items-center justify-center rounded-full bg-[#0a78d4] tracking-[-0.900px] text-white">13</div>
    </div>
  );
}

function Taskbar() {
  return (
    <footer className="flex h-[60px] items-center border-t border-[#c9d3e2] bg-[linear-gradient(90deg,#dfeaf3_0%,#dde8f2_15%,#d9dff0_19.500%,#d4e1f1_23%,#d9dcee_27%,#dadaeb_35%,#d4dfef_39%,#d8dcec_48%,#d8dbe9_58%,#d5dfec_65%,#d6dde9_75%,#dde8f1_82%,#deebf5_100%)]">
      <div className="flex w-[333px] shrink-0 items-center pl-[26px]">
        <div className="relative pb-[6px]">
          <WeatherIcon />
          <div className="absolute top-0 left-[14px] flex h-[20px] w-[20px] items-center justify-center text-[14px] leading-none text-white">1</div>
        </div>
        <div className="ml-[6px] flex flex-col pb-[2px] text-[14.600px] leading-[20px] whitespace-nowrap">
          <span className="tracking-[-0.900px] text-[#1b1b1b]">31°C</span>
          <span className="tracking-[0.020px] text-[#5c6066]">Mostly cloudy</span>
        </div>
      </div>
      <div className="flex w-[54px] shrink-0 justify-center pl-[1px]">
        <svg viewBox="0 0 30 30" width="30" height="30" className="block">
          <defs>
            <linearGradient id="win" gradientUnits="userSpaceOnUse" x1="0" y1="0" x2="30" y2="30">
              <stop offset="0" stopColor="#4cc9fa" />
              <stop offset="0.450" stopColor="#1a94e4" />
              <stop offset="1" stopColor="#0070d0" />
            </linearGradient>
          </defs>
          <path d="M.5 1.500a1 1 0 0 1 1-1h13v14H.5zM15.500.5h13a1 1 0 0 1 1 1v13h-14zM.5 15.500h14v14h-13a1 1 0 0 1-1-1zM15.500 15.500h14v13a1 1 0 0 1-1 1h-13z" fill="url(#win)" />
        </svg>
      </div>
      <div className="ml-[5.500px] flex h-[39px] w-[273.500px] shrink-0 items-center rounded-full border border-[#c5cbdb] bg-[#f4f6fb]">
        <Line viewBox="0 0 20 20" width="20" height="20" strokeWidth="2" className="ml-[12px]">
          <circle cx="11.800" cy="8" r="6.300" />
          <path d="M7 12.600L1.800 18" />
        </Line>
        <span className="ml-[12.500px] pt-px text-[16.600px] tracking-[-0.08px] text-[#55585d]">Search</span>
        <div className="ml-auto">
          <SearchScene />
        </div>
      </div>
      <div className="ml-[3.500px] shrink-0">
        <Apps />
      </div>
      <div className="ml-auto h-full shrink-0">
        <Tray />
      </div>
    </footer>
  );
}

export default function App() {
  return (
    <div className="flex h-[1080px] w-[1920px] flex-col overflow-hidden bg-[#f7f7f7] font-['Open_Sans','Noto_Sans',sans-serif]">
      <TabStrip />
      <Toolbar />
      <div className="flex h-[933px] shrink-0">
        <Page />
        <Sidebar />
      </div>
      <Taskbar />
    </div>
  );
}
